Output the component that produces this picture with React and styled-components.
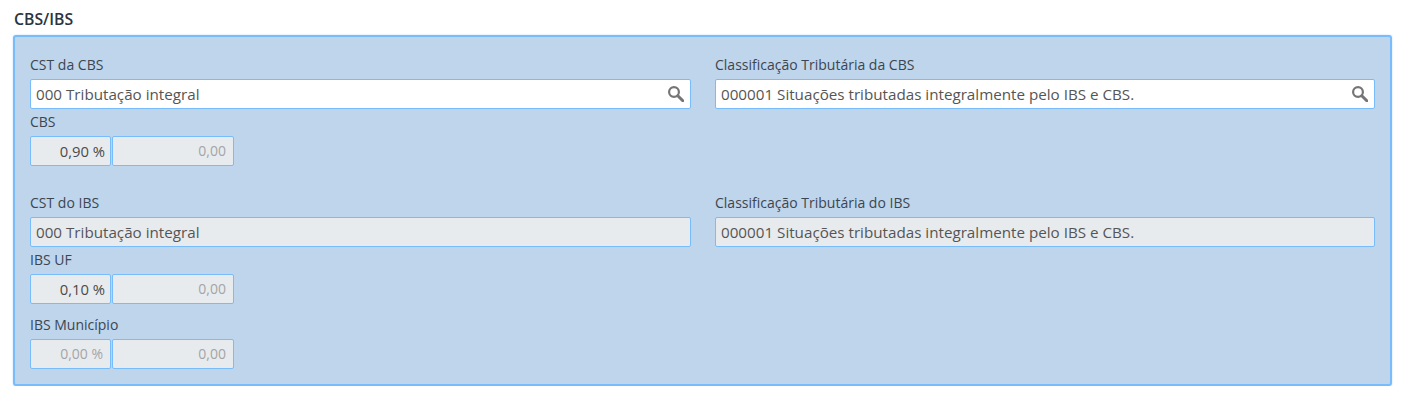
import React from 'react'
import styled, { createGlobalStyle } from 'styled-components'

const GlobalStyle = createGlobalStyle`
  html, body {
    margin: 0;
    padding: 0;
    background: #fff;
    font-family: 'Open Sans', sans-serif;
  }
`

const Page = styled.div`
  padding: 10px 17px 0 13px;
`

const Title = styled.h3`
  margin: 0 0 7px;
  font-size: 15.8px;
  line-height: 18px;
  font-weight: 600;
  color: #2b3440;
  padding-left: 1px;
`

const Panel = styled.section`
  box-sizing: border-box;
  height: 351px;
  padding: 19px 15px 0;
  background: #bed5ec;
  border: 2px solid #78bcfb;
  border-radius: 3px;
  box-shadow: 0 0 2px rgba(120, 188, 251, 0.5);
`

const Row = styled.div`
  display: grid;
  grid-template-columns: 661px 660px;
  column-gap: 24px;
`

const Label = styled.label`
  display: block;
  font-size: 14px;
  line-height: 18px;
  margin-bottom: 5px;
  color: #3c4650;
`

const ShortLabel = styled(Label)`
  margin-top: 4px;
`

const Input = styled.div`
  box-sizing: border-box;
  height: 30px;
  display: flex;
  align-items: center;
  justify-content: space-between;
  padding: 0 6px 0 5px;
  font-size: 15.2px;
  color: #555;
  background: ${p => (p.$readOnly ? '#e8ebee' : '#fff')};
  border: 1px solid #78bcfb;
  border-radius: 2px;
`

const SearchSvg = styled.svg`
  width: 16px;
  height: 16px;
  flex: none;
  fill: none;
  stroke: #757575;
`

const SearchIcon = () => (
  <SearchSvg viewBox="0 0 16 16">
    <circle cx="6" cy="6" r="4.9" strokeWidth="2.2" />
    <line x1="9.8" y1="9.8" x2="14.8" y2="14.8" strokeWidth="3" strokeLinecap="round" />
  </SearchSvg>
)

const TaxBlock = styled.div`
  margin-bottom: ${p => p.$gap || 0}px;
`

const AmountGroup = styled.div`
  display: flex;
  gap: 1px;
`

const Amount = styled.div`
  box-sizing: border-box;
  width: ${p => p.$width}px;
  height: 30px;
  line-height: 28px;
  padding-right: ${p => p.$pad}px;
  text-align: right;
  font-size: ${p => (p.$muted ? 14 : 14.8)}px;
  color: ${p => (p.$muted ? '#a3a5a7' : '#4a4a4a')};
  background: #e8ebee;
  border: 1px solid #78bcfb;
  border-radius: 2px;
`

const TaxField = ({ label, rate, rateMuted, gap }) => (
  <TaxBlock $gap={gap}>
    <ShortLabel>{label}</ShortLabel>
    <AmountGroup>
      <Amount $width={81} $pad={rateMuted ? 7 : 5} $muted={rateMuted}>{rate}</Amount>
      <Amount $width={122} $pad={7} $muted>0,00</Amount>
    </AmountGroup>
  </TaxBlock>
)

const App = () => (
  <Page>
    <GlobalStyle />
    <Title>CBS/IBS</Title>
    <Panel>
      <Row>
        <div>
          <Label>CST da CBS</Label>
          <Input>000 Tributação integral<SearchIcon /></Input>
        </div>
        <div>
          <Label>Classificação Tributária da CBS</Label>
          <Input>000001 Situações tributadas integralmente pelo IBS e CBS.<SearchIcon /></Input>
        </div>
      </Row>
      <TaxField label="CBS" rate="0,90 %" gap={28} />
      <Row>
        <div>
          <Label>CST do IBS</Label>
          <Input $readOnly>000 Tributação integral</Input>
        </div>
        <div>
          <Label>Classificação Tributária do IBS</Label>
          <Input $readOnly>000001 Situações tributadas integralmente pelo IBS e CBS.</Input>
        </div>
      </Row>
      <TaxField label="IBS UF" rate="0,10 %" gap={12} />
      <TaxField label="IBS Município" rate="0,00 %" rateMuted />
    </Panel>
  </Page>
)

export default App
